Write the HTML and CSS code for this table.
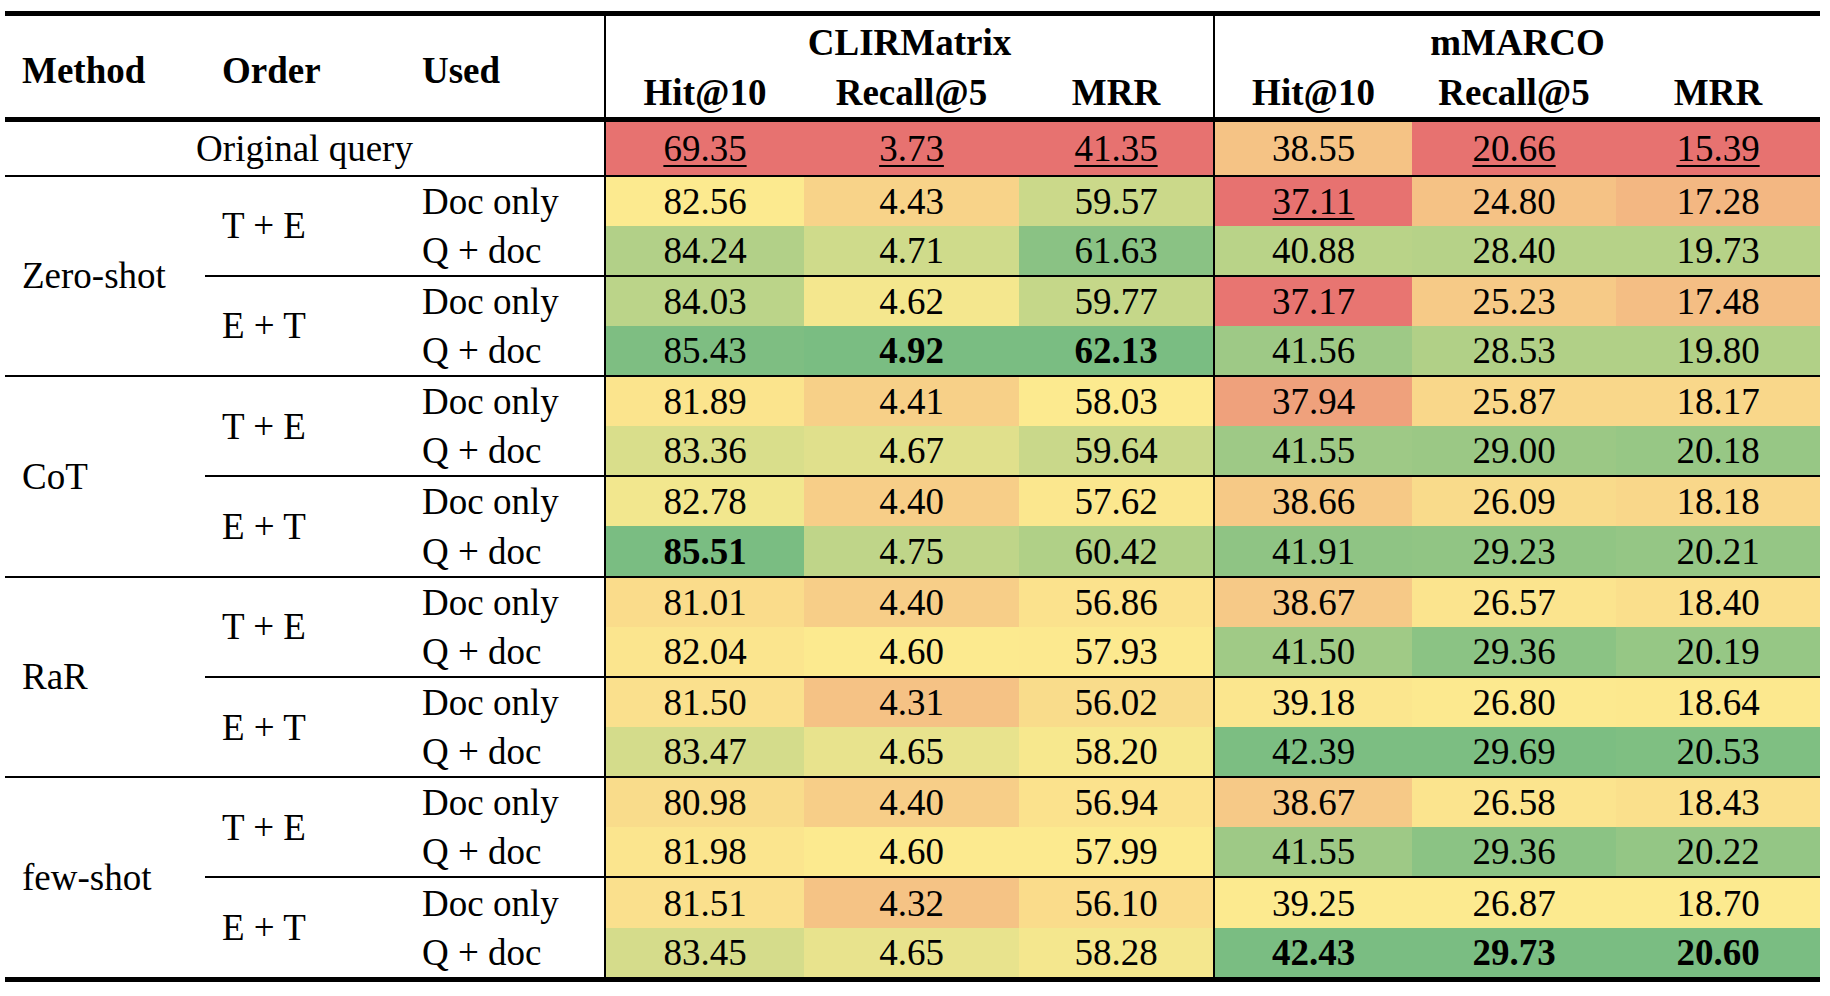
FILE: index.html
```html
<!DOCTYPE html>
<html lang="en">
<head>
<meta charset="utf-8">
<title>Results table</title>
<link rel="stylesheet" href="styles.css">
<script src="script.js" defer></script>
</head>
<body>
<div class="page">
<table class="results">
  <colgroup>
    <col class="w-method"><col class="w-order"><col class="w-used">
    <col class="w-d1"><col class="w-d2"><col class="w-d3">
    <col class="w-d4"><col class="w-d5"><col class="w-d6">
  </colgroup>
  <thead>
    <tr class="h1">
      <th rowspan="2" class="lab">Method</th>
      <th rowspan="2" class="lab">Order</th>
      <th rowspan="2" class="lab sep">Used</th>
      <th colspan="3" class="ds sep">CLIRMatrix</th>
      <th colspan="3" class="ds">mMARCO</th>
    </tr>
    <tr class="h2">
      <th>Hit@10</th><th>Recall@5</th><th class="sep">MRR</th>
      <th>Hit@10</th><th>Recall@5</th><th>MRR</th>
    </tr>
  </thead>
  <tbody class="orig">
    <tr>
      <td colspan="3" class="origlab sep">Original query</td>
      <td class="num"><u>69.35</u></td><td class="num"><u>3.73</u></td><td class="num sep"><u>41.35</u></td>
      <td class="num">38.55</td><td class="num"><u>20.66</u></td><td class="num"><u>15.39</u></td>
    </tr>
  </tbody>
  <tbody class="group">
    <tr>
      <td rowspan="4" class="method">Zero-shot</td>
      <td rowspan="2" class="order">T + E</td>
      <td class="used sep">Doc only</td>
      <td class="num">82.56</td><td class="num">4.43</td><td class="num sep">59.57</td>
      <td class="num"><u>37.11</u></td><td class="num">24.80</td><td class="num">17.28</td>
    </tr>
    <tr>
      <td class="used sep">Q + doc</td>
      <td class="num">84.24</td><td class="num">4.71</td><td class="num sep">61.63</td>
      <td class="num">40.88</td><td class="num">28.40</td><td class="num">19.73</td>
    </tr>
    <tr class="sub">
      <td rowspan="2" class="order">E + T</td>
      <td class="used sep">Doc only</td>
      <td class="num">84.03</td><td class="num">4.62</td><td class="num sep">59.77</td>
      <td class="num">37.17</td><td class="num">25.23</td><td class="num">17.48</td>
    </tr>
    <tr>
      <td class="used sep">Q + doc</td>
      <td class="num">85.43</td><td class="num"><b>4.92</b></td><td class="num sep"><b>62.13</b></td>
      <td class="num">41.56</td><td class="num">28.53</td><td class="num">19.80</td>
    </tr>
  </tbody>
  <tbody class="group">
    <tr>
      <td rowspan="4" class="method">CoT</td>
      <td rowspan="2" class="order">T + E</td>
      <td class="used sep">Doc only</td>
      <td class="num">81.89</td><td class="num">4.41</td><td class="num sep">58.03</td>
      <td class="num">37.94</td><td class="num">25.87</td><td class="num">18.17</td>
    </tr>
    <tr>
      <td class="used sep">Q + doc</td>
      <td class="num">83.36</td><td class="num">4.67</td><td class="num sep">59.64</td>
      <td class="num">41.55</td><td class="num">29.00</td><td class="num">20.18</td>
    </tr>
    <tr class="sub">
      <td rowspan="2" class="order">E + T</td>
      <td class="used sep">Doc only</td>
      <td class="num">82.78</td><td class="num">4.40</td><td class="num sep">57.62</td>
      <td class="num">38.66</td><td class="num">26.09</td><td class="num">18.18</td>
    </tr>
    <tr>
      <td class="used sep">Q + doc</td>
      <td class="num"><b>85.51</b></td><td class="num">4.75</td><td class="num sep">60.42</td>
      <td class="num">41.91</td><td class="num">29.23</td><td class="num">20.21</td>
    </tr>
  </tbody>
  <tbody class="group">
    <tr>
      <td rowspan="4" class="method">RaR</td>
      <td rowspan="2" class="order">T + E</td>
      <td class="used sep">Doc only</td>
      <td class="num">81.01</td><td class="num">4.40</td><td class="num sep">56.86</td>
      <td class="num">38.67</td><td class="num">26.57</td><td class="num">18.40</td>
    </tr>
    <tr>
      <td class="used sep">Q + doc</td>
      <td class="num">82.04</td><td class="num">4.60</td><td class="num sep">57.93</td>
      <td class="num">41.50</td><td class="num">29.36</td><td class="num">20.19</td>
    </tr>
    <tr class="sub">
      <td rowspan="2" class="order">E + T</td>
      <td class="used sep">Doc only</td>
      <td class="num">81.50</td><td class="num">4.31</td><td class="num sep">56.02</td>
      <td class="num">39.18</td><td class="num">26.80</td><td class="num">18.64</td>
    </tr>
    <tr>
      <td class="used sep">Q + doc</td>
      <td class="num">83.47</td><td class="num">4.65</td><td class="num sep">58.20</td>
      <td class="num">42.39</td><td class="num">29.69</td><td class="num">20.53</td>
    </tr>
  </tbody>
  <tbody class="group">
    <tr>
      <td rowspan="4" class="method">few-shot</td>
      <td rowspan="2" class="order">T + E</td>
      <td class="used sep">Doc only</td>
      <td class="num">80.98</td><td class="num">4.40</td><td class="num sep">56.94</td>
      <td class="num">38.67</td><td class="num">26.58</td><td class="num">18.43</td>
    </tr>
    <tr>
      <td class="used sep">Q + doc</td>
      <td class="num">81.98</td><td class="num">4.60</td><td class="num sep">57.99</td>
      <td class="num">41.55</td><td class="num">29.36</td><td class="num">20.22</td>
    </tr>
    <tr class="sub">
      <td rowspan="2" class="order">E + T</td>
      <td class="used sep">Doc only</td>
      <td class="num">81.51</td><td class="num">4.32</td><td class="num sep">56.10</td>
      <td class="num">39.25</td><td class="num">26.87</td><td class="num">18.70</td>
    </tr>
    <tr>
      <td class="used sep">Q + doc</td>
      <td class="num">83.45</td><td class="num">4.65</td><td class="num sep">58.28</td>
      <td class="num"><b>42.43</b></td><td class="num"><b>29.73</b></td><td class="num"><b>20.60</b></td>
    </tr>
  </tbody>
</table>
</div>
</body>
</html>
```

FILE: styles.css
```css
html, body {
  margin: 0;
  padding: 0;
  background: #ffffff;
}

body {
  font-family: "Liberation Serif", "Times New Roman", serif;
  color: #000000;
}

.page {
  padding: 11px 0 0 5px;
}

.results {
  border-collapse: collapse;
  table-layout: fixed;
  width: 1815px;
  font-size: 37px;
  line-height: 1;
  border-top: 5px solid #000;
  border-bottom: 5px solid #000;
}

.w-method { width: 200px; }
.w-order  { width: 200px; }
.w-used   { width: 200px; }
.w-d1 { width: 199px; }
.w-d2 { width: 215px; }
.w-d3 { width: 195px; }
.w-d4 { width: 198px; }
.w-d5 { width: 204px; }
.w-d6 { width: 204px; }

.results th,
.results td {
  padding: 0;
  vertical-align: middle;
}

.results th {
  font-weight: bold;
  text-align: center;
  border-bottom: 5px solid #000;
}

.results .h1 th {
  height: 52px;
}

.results .h1 th.ds {
  border-bottom: none;
}

.results .h2 th {
  height: 49px;
}

.results th.lab {
  text-align: left;
  padding-left: 17px;
  padding-top: 7px;
}

.results .sep {
  border-right: 2px solid #000;
}

.results td {
  height: 49.15px;
}

.orig td {
  height: 52.5px;
  border-bottom: 2px solid #000;
}

.origlab {
  text-align: center;
}

.group tr:first-child td {
  border-top: 2px solid #000;
}

.group tr.sub td {
  border-top: 2px solid #000;
}

.method,
.order,
.used {
  text-align: left;
  padding-left: 17px !important;
}

.num {
  text-align: center;
}

.num u {
  text-decoration: underline;
  text-decoration-thickness: 2px;
  text-underline-offset: 4px;
}

.num b {
  font-weight: bold;
}
```

FILE: script.js
```javascript
(function () {
  var RED = [231, 114, 112];
  var YEL = [252, 234, 143];
  var GRN = [122, 189, 130];

  function mix(a, b, t) {
    t = Math.max(0, Math.min(1, t));
    return [0, 1, 2].map(function (i) {
      return Math.round(a[i] + (b[i] - a[i]) * t);
    });
  }

  function median(arr) {
    var s = arr.slice().sort(function (x, y) { return x - y; });
    var n = s.length;
    var pos = (n - 1) * 0.5;
    var lo = Math.floor(pos), hi = Math.ceil(pos);
    return s[lo] + (s[hi] - s[lo]) * (pos - lo);
  }

  var rows = document.querySelectorAll('.results tbody tr');
  var cols = [[], [], [], [], [], []];
  rows.forEach(function (tr) {
    var cells = tr.querySelectorAll('td.num');
    cells.forEach(function (td, j) {
      cols[j].push({ el: td, v: parseFloat(td.textContent) });
    });
  });

  cols.forEach(function (col) {
    var vals = col.map(function (c) { return c.v; });
    var mn = Math.min.apply(null, vals);
    var mx = Math.max.apply(null, vals);
    var md = median(vals);
    col.forEach(function (c) {
      var rgb;
      if (c.v <= md) {
        rgb = mix(RED, YEL, md === mn ? 1 : (c.v - mn) / (md - mn));
      } else {
        rgb = mix(YEL, GRN, mx === md ? 1 : (c.v - md) / (mx - md));
      }
      c.el.style.backgroundColor = 'rgb(' + rgb.join(',') + ')';
    });
  });
})();
```
